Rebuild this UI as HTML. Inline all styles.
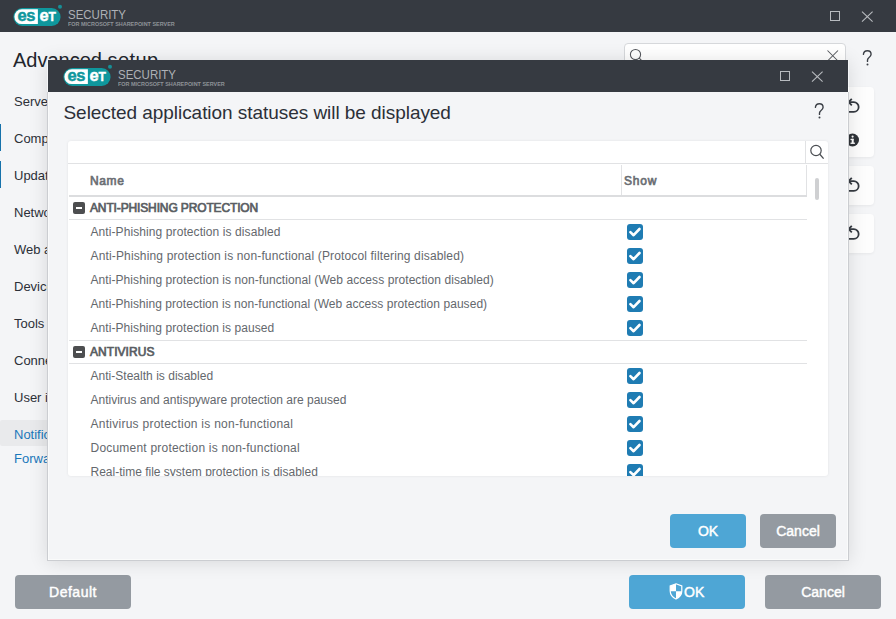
<!DOCTYPE html>
<html><head><meta charset="utf-8">
<style>
*{box-sizing:border-box;margin:0;padding:0}
html,body{width:896px;height:619px;overflow:hidden;background:#f4f5f7;font-family:"Liberation Sans",sans-serif;position:relative}
.abs{position:absolute}
.tbar{left:0;top:0;width:896px;height:32px;background:#363a41}
.logo{position:absolute;width:54px;height:24px}
.brand{position:absolute;color:#aeb1b6;font-size:13.5px;line-height:13px;white-space:nowrap;transform:scaleX(0.85);transform-origin:0 0}
.sub{position:absolute;color:#8f9398;font-size:5.5px;line-height:6px;font-weight:bold;white-space:nowrap;transform:scaleX(0.99);transform-origin:0 0}
.h1{left:13px;top:47.6px;font-size:20px;line-height:24px;color:#22262d;white-space:nowrap}
.nav{position:absolute;left:14px;font-size:13px;line-height:16px;color:#2c3038;white-space:nowrap}
.nav.link{color:#1a78bb}
.navbar{position:absolute;left:0;width:1px;background:#1672ab}
.panel{position:absolute;left:820px;width:54px;background:#fdfdfd;border-radius:4px;box-shadow:0 1px 3px rgba(0,0,0,0.06)}
.btn{position:absolute;height:34px;border-radius:4px;color:#fff;font-size:14px;font-weight:normal;-webkit-text-stroke:0.45px #fff;text-align:center;line-height:34px}
.blue{background:#4ea6d5}
.gray{background:#949aa1}
.wc{position:absolute;border:1px solid #b8bbbf;width:10px;height:10px}
.x{position:absolute}
/* dialog */
.dlg{left:48px;top:60px;width:800px;height:500px;background:#f4f5f7}
.dshadow{position:absolute;left:47px;top:60px;width:802px;height:501px;box-shadow:0 1px 18px rgba(0,0,0,0.12)}
.dborder{position:absolute;left:-1px;top:32px;width:802px;height:469px;border:1px solid #cbcdd1;border-top:none;box-shadow:inset 1px 0 0 rgba(255,255,255,0.55),inset -1px 0 0 rgba(255,255,255,0.55),inset 0 -1px 0 rgba(255,255,255,0.55)}
.dbar{left:0;top:0;width:800px;height:32px;background:#363a41}
.title{position:absolute;left:15.5px;top:41px;font-size:19px;line-height:24px;color:#2c3038;white-space:nowrap;letter-spacing:-0.05px}
.box{position:absolute;left:20px;top:81px;width:760px;height:335px;background:#fff;border-radius:3px;box-shadow:0 0 3px rgba(0,0,0,0.08);overflow:hidden}
.rtext{position:absolute;left:22.5px;font-size:12px;color:#64686d;white-space:nowrap;line-height:24px;letter-spacing:0.08px}
.gtext{position:absolute;left:22px;font-size:12px;font-weight:normal;-webkit-text-stroke:0.7px #5a5e63;color:#5a5e63;white-space:nowrap;line-height:24px;letter-spacing:-0.2px}
.hd{position:absolute;font-size:12px;font-weight:normal;-webkit-text-stroke:0.65px #6a6e73;color:#6a6e73;white-space:nowrap;line-height:31px;letter-spacing:-0.2px}
.line{position:absolute;left:1px;width:738px;height:1px;background:#e1e2e4}
.line2{position:absolute;left:1px;width:738px;height:2px;background:#dcdddf}
.vl{position:absolute;width:1px;background:#e1e2e4}
.thumb{position:absolute;left:747px;width:4px;height:22px;background:#cfd0d2;border-radius:2px}
.cb{position:absolute;left:559px;width:16px;height:16px;background:#1f7cb3;border-radius:3px}
.cb svg{position:absolute;left:0;top:0}
.minus{position:absolute;left:5px;width:12px;height:12px;background:#4d4e50;border-radius:2px}
.minus:after{content:"";position:absolute;left:3px;top:5px;width:6px;height:2px;background:#fff}
</style></head>
<body>
<!-- main title bar -->
<div class="abs tbar"></div>
<div class="logo" style="left:13px;top:4px"><svg width="54" height="24" viewBox="0 -2 54 24">
<rect x="0.4" y="2.1" width="47.2" height="17.8" rx="8.9" fill="#0f979d"/>
<path d="M8.8 3.3 H24.9 V18.1 H8.8 A7.4 7.4 0 0 1 8.8 3.3 Z" fill="#fff"/>
<circle cx="47" cy="0.8" r="2" fill="#178f96"/>
<text x="4.6" y="14.9" font-family="Liberation Sans" font-weight="bold" font-size="16.5" fill="#0f979d" stroke="#0f979d" stroke-width="0.45" letter-spacing="-0.5">es</text>
<text x="26.6" y="14.9" font-family="Liberation Sans" font-weight="bold" font-size="16.5" fill="#fff" stroke="#fff" stroke-width="0.45">e</text>
<text x="35.6" y="14.9" font-family="Liberation Sans" font-weight="bold" font-size="12" fill="#fff" stroke="#fff" stroke-width="0.4">T</text>
</svg></div>
<div class="brand" style="left:68px;top:8px">SECURITY</div>
<div class="sub" style="left:68px;top:21px">FOR MICROSOFT SHAREPOINT SERVER</div>
<div class="wc" style="left:830px;top:11px"></div>
<svg class="x" style="left:861px;top:11px" width="13" height="12" viewBox="0 0 13 12"><path d="M1 0.6 L11.6 10.6 M11.6 0.6 L1 10.6" stroke="#b8bbbf" stroke-width="1.1"/></svg>

<div class="abs h1">Advanced <span style="letter-spacing:0.45px">setup</span></div>

<!-- search box main -->
<div class="abs" style="left:624px;top:43px;width:222px;height:30px;background:#fff;border:1px solid #d6d8db;border-radius:4px"></div>
<svg class="abs" style="left:626px;top:45px" width="20" height="20" viewBox="0 0 20 20"><circle cx="9.5" cy="9.5" r="5.1" fill="none" stroke="#55585d" stroke-width="1.05"/><line x1="13.2" y1="13.2" x2="17" y2="17" stroke="#55585d" stroke-width="1.1"/></svg>
<svg class="abs" style="left:826px;top:49px" width="14" height="14" viewBox="0 0 14 14"><path d="M1.5 1.5 L12 12 M12 1.5 L1.5 12" stroke="#55585d" stroke-width="1.05"/></svg>
<svg class="abs" style="left:861px;top:48.5px" width="13" height="18" viewBox="0 0 13 18"><path d="M2.4 5.4 C2.6 3.2 4.3 1.7 6.4 1.7 C8.6 1.7 10.1 3.3 10.1 5.3 C10.1 7.3 8.6 8.3 7.4 9.2 C6.8 9.7 6.5 10.3 6.5 11.2 V12.4" fill="none" stroke="#3c4047" stroke-width="1.4" stroke-linecap="round"/><circle cx="6.5" cy="15.6" r="1" fill="#3c4047"/></svg>

<div class="nav" style="top:93.5px">Server</div>
<div class="navbar" style="top:124px;height:27px"></div>
<div class="nav" style="top:130.5px">Computer</div>
<div class="navbar" style="top:161px;height:27px"></div>
<div class="nav" style="top:167.5px">Update</div>
<div class="nav" style="top:204.5px">Network</div>
<div class="nav" style="top:241.5px">Web and email</div>
<div class="nav" style="top:278.5px">Device control</div>
<div class="nav" style="top:315.5px">Tools</div>
<div class="nav" style="top:352.5px">Connectivity</div>
<div class="nav" style="top:389.5px">User interface</div>
<div class="abs" style="left:0;top:420px;width:60px;height:26px;background:#e9eaec;border-radius:2px"></div>
<div class="nav link" style="top:427px">Notifications</div>
<div class="nav link" style="top:451px">Forwarding</div>

<div class="panel" style="top:87px;height:70px"></div>
<div class="panel" style="top:166px;height:39px"></div>
<div class="panel" style="top:214px;height:39px"></div>
<svg class="abs" style="left:845px;top:96px" width="18" height="18" viewBox="0 0 18 18"><path d="M4 6.1 H8.8 A4.85 4.85 0 0 1 8.8 15.8 H1" fill="none" stroke="#363b42" stroke-width="1.8"/><path d="M6.8 2.8 L3.6 6.1 L6.8 9.4" fill="none" stroke="#363b42" stroke-width="1.8"/></svg>
<svg class="abs" style="left:845px;top:175px" width="18" height="18" viewBox="0 0 18 18"><path d="M4 6.1 H8.8 A4.85 4.85 0 0 1 8.8 15.8 H1" fill="none" stroke="#363b42" stroke-width="1.8"/><path d="M6.8 2.8 L3.6 6.1 L6.8 9.4" fill="none" stroke="#363b42" stroke-width="1.8"/></svg>
<svg class="abs" style="left:845px;top:223px" width="18" height="18" viewBox="0 0 18 18"><path d="M4 6.1 H8.8 A4.85 4.85 0 0 1 8.8 15.8 H1" fill="none" stroke="#363b42" stroke-width="1.8"/><path d="M6.8 2.8 L3.6 6.1 L6.8 9.4" fill="none" stroke="#363b42" stroke-width="1.8"/></svg>
<svg class="abs" style="left:846.4px;top:133px" width="14" height="14" viewBox="0 0 14 14"><circle cx="6.5" cy="7" r="6.5" fill="#2f3338"/><rect x="5.7" y="5.8" width="2" height="4.6" fill="#fff"/><rect x="4.5" y="5.8" width="3" height="1.3" fill="#fff"/><rect x="4.5" y="9.6" width="4.4" height="1.3" fill="#fff"/><circle cx="6.6" cy="3.6" r="1.1" fill="#fff"/></svg>

<div class="btn gray" style="left:15px;top:575px;width:116px;letter-spacing:0.5px">Default</div>
<div class="btn blue" style="left:629px;top:575px;width:116px"><svg width="14" height="17" viewBox="0 0 14 17" style="position:absolute;left:40px;top:8px">
<path d="M7 0.8 L12.8 3 V8 C12.8 11.8 10.3 14.4 7 16 C3.7 14.4 1.2 11.8 1.2 8 V3 Z" fill="none" stroke="#fff" stroke-width="1.2"/>
<path d="M7 0.8 L1.2 3 V8.3 H7 Z" fill="#fff"/>
<path d="M7 8.3 H12.8 C12.6 11.9 10.2 14.4 7 16 Z" fill="#fff"/>
</svg><span style="position:absolute;left:55px;top:0">OK</span></div>
<div class="btn gray" style="left:765px;top:575px;width:116px">Cancel</div>

<!-- dialog -->
<div class="dshadow"></div>
<div class="abs dlg">
  <div class="abs dbar"></div>
  <div class="dborder"></div>
  <div class="logo" style="left:15px;top:4px"><svg width="54" height="24" viewBox="0 -2 54 24">
<rect x="0.4" y="2.1" width="47.2" height="17.8" rx="8.9" fill="#0f979d"/>
<path d="M8.8 3.3 H24.9 V18.1 H8.8 A7.4 7.4 0 0 1 8.8 3.3 Z" fill="#fff"/>
<circle cx="47" cy="0.8" r="2" fill="#178f96"/>
<text x="4.6" y="14.9" font-family="Liberation Sans" font-weight="bold" font-size="16.5" fill="#0f979d" stroke="#0f979d" stroke-width="0.45" letter-spacing="-0.5">es</text>
<text x="26.6" y="14.9" font-family="Liberation Sans" font-weight="bold" font-size="16.5" fill="#fff" stroke="#fff" stroke-width="0.45">e</text>
<text x="35.6" y="14.9" font-family="Liberation Sans" font-weight="bold" font-size="12" fill="#fff" stroke="#fff" stroke-width="0.4">T</text>
</svg></div>
  <div class="brand" style="left:70px;top:8px">SECURITY</div>
  <div class="sub" style="left:70px;top:21px">FOR MICROSOFT SHAREPOINT SERVER</div>
  <div class="wc" style="left:732px;top:11px"></div>
  <svg class="x" style="left:763px;top:11px" width="13" height="12" viewBox="0 0 13 12"><path d="M1 0.6 L11.6 10.6 M11.6 0.6 L1 10.6" stroke="#b8bbbf" stroke-width="1.1"/></svg>
  <div class="title">Selected application statuses will be displayed</div>
  <div class="box">
<div class="line" style="left:0;width:760px;top:22px"></div>
<div class="vl" style="left:737px;top:0;height:22px"></div>
<svg class="abs" style="left:740px;top:2px" width="20" height="20" viewBox="0 0 20 20"><circle cx="8" cy="7.5" r="5.2" fill="none" stroke="#4a4d52" stroke-width="1.2"/><line x1="11.8" y1="11.3" x2="15.6" y2="15.6" stroke="#4a4d52" stroke-width="1.3"/></svg>
<div class="vl" style="left:553px;top:24px;height:31px"></div>
<div class="vl" style="left:738px;top:24px;height:31px"></div>
<div class="hd" style="left:22px;top:25px;letter-spacing:0.6px">Name</div>
<div class="hd" style="left:556px;top:25px;letter-spacing:0.8px">Show</div>
<div class="line2" style="top:54px"></div>
<div class="thumb" style="top:37px"></div>
<div class="minus" style="top:61px"></div>
<div class="gtext" style="top:55px;letter-spacing:-0.135px">ANTI-PHISHING PROTECTION</div>
<div class="line" style="top:78px"></div>
<div class="rtext" style="top:79px;letter-spacing:0.089px">Anti-Phishing protection is disabled</div>
<div class="cb" style="top:83px"><svg width="16" height="16" viewBox="0 0 16 16"><path d="M3.4 8.1 L6.6 11.2 L12.5 5.0" fill="none" stroke="#fff" stroke-width="2.6" stroke-linecap="round" stroke-linejoin="round"/></svg></div>
<div class="rtext" style="top:103px;letter-spacing:0.150px">Anti-Phishing protection is non-functional (Protocol filtering disabled)</div>
<div class="cb" style="top:107px"><svg width="16" height="16" viewBox="0 0 16 16"><path d="M3.4 8.1 L6.6 11.2 L12.5 5.0" fill="none" stroke="#fff" stroke-width="2.6" stroke-linecap="round" stroke-linejoin="round"/></svg></div>
<div class="rtext" style="top:127px;letter-spacing:0.071px">Anti-Phishing protection is non-functional (Web access protection disabled)</div>
<div class="cb" style="top:131px"><svg width="16" height="16" viewBox="0 0 16 16"><path d="M3.4 8.1 L6.6 11.2 L12.5 5.0" fill="none" stroke="#fff" stroke-width="2.6" stroke-linecap="round" stroke-linejoin="round"/></svg></div>
<div class="rtext" style="top:151px;letter-spacing:0.055px">Anti-Phishing protection is non-functional (Web access protection paused)</div>
<div class="cb" style="top:155px"><svg width="16" height="16" viewBox="0 0 16 16"><path d="M3.4 8.1 L6.6 11.2 L12.5 5.0" fill="none" stroke="#fff" stroke-width="2.6" stroke-linecap="round" stroke-linejoin="round"/></svg></div>
<div class="rtext" style="top:175px;letter-spacing:0.068px">Anti-Phishing protection is paused</div>
<div class="cb" style="top:179px"><svg width="16" height="16" viewBox="0 0 16 16"><path d="M3.4 8.1 L6.6 11.2 L12.5 5.0" fill="none" stroke="#fff" stroke-width="2.6" stroke-linecap="round" stroke-linejoin="round"/></svg></div>
<div class="line" style="top:199px"></div>
<div class="minus" style="top:205px"></div>
<div class="gtext" style="top:199px;letter-spacing:0.05px">ANTIVIRUS</div>
<div class="line" style="top:222px"></div>
<div class="rtext" style="top:223px;letter-spacing:0.023px">Anti-Stealth is disabled</div>
<div class="cb" style="top:227px"><svg width="16" height="16" viewBox="0 0 16 16"><path d="M3.4 8.1 L6.6 11.2 L12.5 5.0" fill="none" stroke="#fff" stroke-width="2.6" stroke-linecap="round" stroke-linejoin="round"/></svg></div>
<div class="rtext" style="top:247px;letter-spacing:-0.007px">Antivirus and antispyware protection are paused</div>
<div class="cb" style="top:251px"><svg width="16" height="16" viewBox="0 0 16 16"><path d="M3.4 8.1 L6.6 11.2 L12.5 5.0" fill="none" stroke="#fff" stroke-width="2.6" stroke-linecap="round" stroke-linejoin="round"/></svg></div>
<div class="rtext" style="top:271px;letter-spacing:0.261px">Antivirus protection is non-functional</div>
<div class="cb" style="top:275px"><svg width="16" height="16" viewBox="0 0 16 16"><path d="M3.4 8.1 L6.6 11.2 L12.5 5.0" fill="none" stroke="#fff" stroke-width="2.6" stroke-linecap="round" stroke-linejoin="round"/></svg></div>
<div class="rtext" style="top:295px;letter-spacing:0.213px">Document protection is non-functional</div>
<div class="cb" style="top:299px"><svg width="16" height="16" viewBox="0 0 16 16"><path d="M3.4 8.1 L6.6 11.2 L12.5 5.0" fill="none" stroke="#fff" stroke-width="2.6" stroke-linecap="round" stroke-linejoin="round"/></svg></div>
<div class="rtext" style="top:319px;letter-spacing:-0.001px">Real-time file system protection is disabled</div>
<div class="cb" style="top:323px"><svg width="16" height="16" viewBox="0 0 16 16"><path d="M3.4 8.1 L6.6 11.2 L12.5 5.0" fill="none" stroke="#fff" stroke-width="2.6" stroke-linecap="round" stroke-linejoin="round"/></svg></div>
  </div>
  <div class="btn blue" style="left:622px;top:454px;width:76px">OK</div>
  <div class="btn gray" style="left:712px;top:454px;width:76px">Cancel</div>
</div>
<svg class="abs" style="left:813px;top:102px" width="13" height="18" viewBox="0 0 13 18"><path d="M2.4 5.4 C2.6 3.2 4.3 1.7 6.4 1.7 C8.6 1.7 10.1 3.3 10.1 5.3 C10.1 7.3 8.6 8.3 7.4 9.2 C6.8 9.7 6.5 10.3 6.5 11.2 V12.4" fill="none" stroke="#3c4047" stroke-width="1.4" stroke-linecap="round"/><circle cx="6.5" cy="15.6" r="1" fill="#3c4047"/></svg>
</body></html>
